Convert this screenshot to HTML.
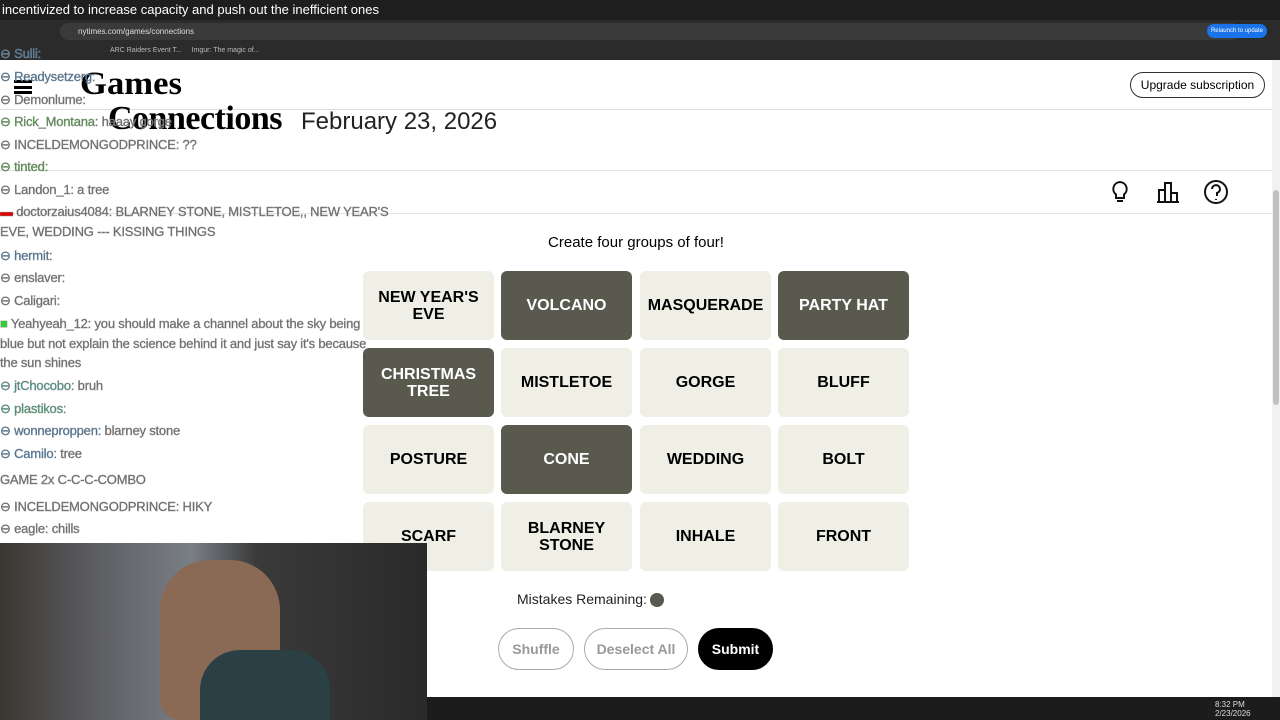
<!DOCTYPE html>
<html><head><style>
*{margin:0;padding:0;box-sizing:border-box}
body{width:1280px;height:720px;overflow:hidden;background:#fff;font-family:"Liberation Sans",sans-serif;position:relative}
.a{position:absolute}
.tile{position:absolute;width:131px;height:69px;border-radius:6px;background:#efefe6;color:#000;font-weight:bold;font-size:16px;display:flex;align-items:center;justify-content:center;text-align:center;line-height:17px}
.sel{background:#5a594e;color:#fff}
.chat{position:absolute;left:0;font-size:13px;color:#666;white-space:nowrap;-webkit-text-stroke:0.4px #888;letter-spacing:-0.2px}
.btn{position:absolute;top:628px;height:42px;border-radius:21px;border:1px solid #aaa;color:#999;font-size:14px;font-weight:bold;display:flex;align-items:center;justify-content:center}
</style></head><body>
<div class="a" style="left:0;top:0;width:1280px;height:20px;background:#1e1e1e;color:#fff;font-size:13px;line-height:20px;padding-left:2px">incentivized to increase capacity and push out the inefficient ones</div>
<div class="a" style="left:0;top:20px;width:1280px;height:22px;background:#2b2b2b"></div>
<div class="a" style="left:60px;top:23px;width:1180px;height:17px;background:#3a3a3a;border-radius:9px;color:#ddd;font-size:8px;line-height:17px;padding-left:18px">nytimes.com/games/connections</div>
<div class="a" style="left:1207px;top:24px;width:60px;height:14px;background:#1a73e8;border-radius:7px;color:#fff;font-size:6px;line-height:14px;text-align:center;white-space:nowrap">Relaunch to update</div>
<div class="a" style="left:0;top:42px;width:1280px;height:18px;background:#2b2b2b;color:#bbb;font-size:7px;line-height:18px;padding-left:110px">ARC Raiders Event T...&nbsp;&nbsp;&nbsp;&nbsp;&nbsp;Imgur: The magic of...</div>
<div class="a" style="left:1272px;top:60px;width:8px;height:637px;background:#f1f1f1"></div>
<div class="a" style="left:1273px;top:190px;width:6px;height:215px;background:#c1c1c1;border-radius:3px"></div>
<div class="a" style="left:0;top:109px;width:1272px;height:1px;background:#ddd"></div>
<div class="a" style="left:0;top:170px;width:1272px;height:1px;background:#e4e4e4"></div>
<div class="a" style="left:0;top:213px;width:1272px;height:1px;background:#e4e4e4"></div>
<div class="a" style="left:14px;top:80px;width:18px;height:14px;border-top:3px solid #000;border-bottom:3px solid #000"><div style="margin-top:3px;height:3px;background:#000"></div></div>
<div class="a" style="left:80px;top:66px;font-family:'Liberation Serif',serif;font-weight:bold;font-size:33px;transform:scaleX(1.05);transform-origin:left">Games</div>
<div class="a" style="left:108px;top:100px;font-family:'Liberation Serif',serif;font-weight:bold;font-size:34px;letter-spacing:-0.5px">Connections</div>
<div class="a" style="left:301px;top:108px;font-size:24px;color:#222">February 23, 2026</div>
<div class="a" style="left:1130px;top:72px;width:135px;height:26px;border:1px solid #333;border-radius:13px;font-size:12px;line-height:24px;text-align:center">Upgrade subscription</div>
<svg class="a" style="left:1108px;top:178px" width="130" height="28" fill="none" stroke="#111" stroke-width="2">
<path d="M12 4a7 7 0 0 0-4 12.5V20h8v-3.5A7 7 0 0 0 12 4zM9 23h6"/>
<path d="M51 24V12h6v12M57 24V5h6v19M63 24v-9h6v9M49 24h22"/>
<circle cx="108" cy="14" r="11"/><path d="M104 11a4 4 0 1 1 5 4v3M108 21v1"/>
</svg>
<div class="a" style="left:0;top:234px;width:1272px;text-align:center;font-size:15px">Create four groups of four!</div>
<div class="tile" style="left:363px;top:271px">NEW YEAR'S<br>EVE</div>
<div class="tile sel" style="left:501px;top:271px">VOLCANO</div>
<div class="tile" style="left:640px;top:271px">MASQUERADE</div>
<div class="tile sel" style="left:778px;top:271px">PARTY HAT</div>
<div class="tile sel" style="left:363px;top:348px">CHRISTMAS<br>TREE</div>
<div class="tile" style="left:501px;top:348px">MISTLETOE</div>
<div class="tile" style="left:640px;top:348px">GORGE</div>
<div class="tile" style="left:778px;top:348px">BLUFF</div>
<div class="tile" style="left:363px;top:425px">POSTURE</div>
<div class="tile sel" style="left:501px;top:425px">CONE</div>
<div class="tile" style="left:640px;top:425px">WEDDING</div>
<div class="tile" style="left:778px;top:425px">BOLT</div>
<div class="tile" style="left:363px;top:502px">SCARF</div>
<div class="tile" style="left:501px;top:502px">BLARNEY<br>STONE</div>
<div class="tile" style="left:640px;top:502px">INHALE</div>
<div class="tile" style="left:778px;top:502px">FRONT</div>
<div class="a" style="left:517px;top:591px;font-size:14px;color:#222">Mistakes Remaining:</div>
<div class="a" style="left:650px;top:593px;width:14px;height:14px;border-radius:50%;background:#5a594e"></div>
<div class="btn" style="left:498px;width:76px">Shuffle</div>
<div class="btn" style="left:584px;width:104px">Deselect All</div>
<div class="btn" style="left:698px;width:75px;background:#000;color:#fff;border-color:#000">Submit</div>
<div class="chat" style="top:46px;color:#3a7ab0">⊖ Sulli:</div>
<div class="chat" style="top:69px;color:#2f6fa8">⊖ Readysetzerg:</div>
<div class="chat" style="top:92px">⊖ Demonlume:</div>
<div class="chat" style="top:114px;color:#3a9a2a">⊖ Rick_Montana:<span style="color:#666"> haaay gorge</span></div>
<div class="chat" style="top:137px">⊖ INCELDEMONGODPRINCE: ??</div>
<div class="chat" style="top:159px;color:#3a9a2a">⊖ tinted:</div>
<div class="chat" style="top:182px">⊖ Landon_1: a tree</div>
<div class="chat" style="top:204px"><span style="color:#d00">▬</span> doctorzaius4084: BLARNEY STONE, MISTLETOE,, NEW YEAR'S</div>
<div class="chat" style="top:224px">EVE, WEDDING --- KISSING THINGS</div>
<div class="chat" style="top:248px;color:#2f6fa8">⊖ hermit:</div>
<div class="chat" style="top:270px">⊖ enslaver:</div>
<div class="chat" style="top:293px">⊖ Caligari:</div>
<div class="chat" style="top:316px"><span style="color:#3c3">■</span> Yeahyeah_12: you should make a channel about the sky being</div>
<div class="chat" style="top:336px">blue but not explain the science behind it and just say it's because</div>
<div class="chat" style="top:355px">the sun shines</div>
<div class="chat" style="top:378px"><span style="color:#2a9a8a">⊖ jtChocobo:</span> bruh</div>
<div class="chat" style="top:401px;color:#2aa06a">⊖ plastikos:</div>
<div class="chat" style="top:423px"><span style="color:#2f6fa8">⊖ wonneproppen:</span> blarney stone</div>
<div class="chat" style="top:446px"><span style="color:#2f6fa8">⊖ Camilo:</span> tree</div>
<div class="chat" style="top:472px">GAME 2x C-C-C-COMBO</div>
<div class="chat" style="top:499px">⊖ INCELDEMONGODPRINCE: HIKY</div>
<div class="chat" style="top:521px">⊖ eagle: chills</div>
<div class="a" style="left:0;top:543px;width:427px;height:177px;background:linear-gradient(90deg,#3a352f 0%,#5a5a5e 20%,#7a7f86 45%,#3a3a3a 60%,#2a2a2a 100%)"></div>
<div class="a" style="left:160px;top:560px;width:120px;height:160px;border-radius:50px 50px 20px 20px;background:#8a6a55"></div>
<div class="a" style="left:200px;top:650px;width:130px;height:70px;background:#2a4045;border-radius:40px 40px 0 0"></div>
<div class="a" style="left:427px;top:697px;width:853px;height:23px;background:#1c1c1c"></div>
<div class="a" style="left:1215px;top:700px;color:#ddd;font-size:8px;line-height:9px">8:32 PM<br>2/23/2026</div>
</body></html>
